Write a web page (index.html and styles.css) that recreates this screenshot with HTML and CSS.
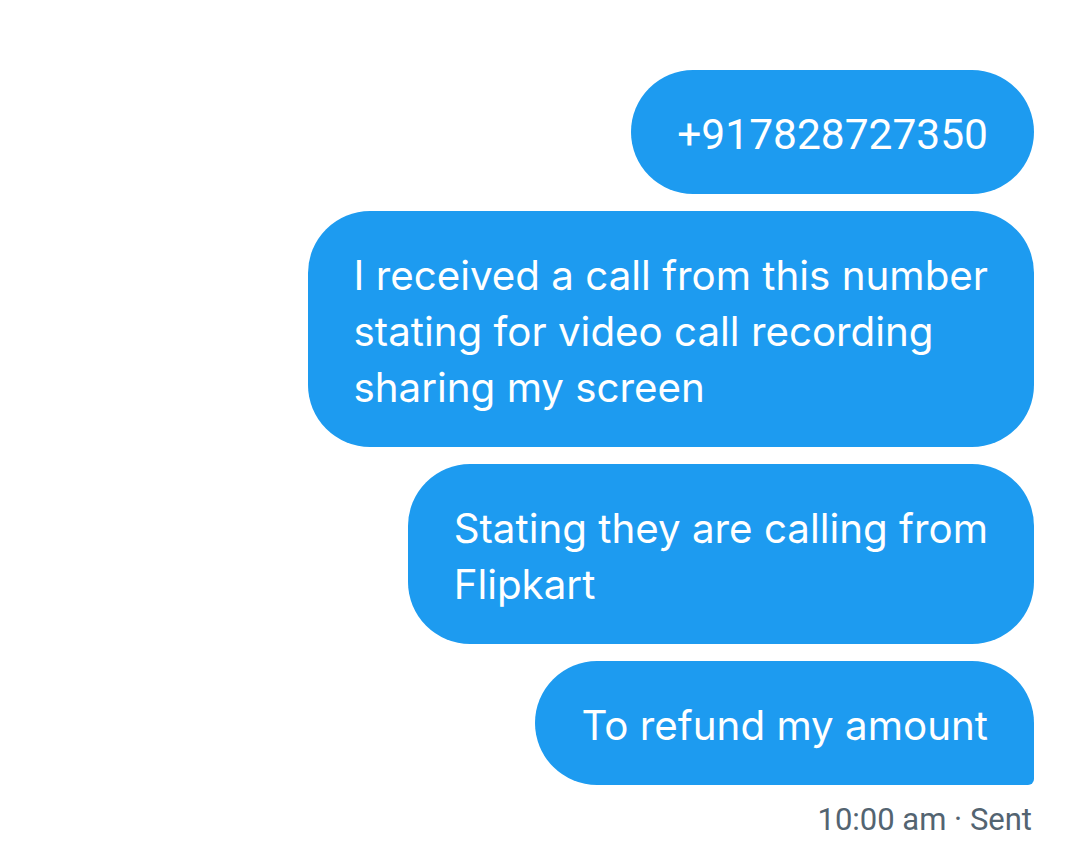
FILE: index.html
```html
<!DOCTYPE html>
<html lang="en">
<head>
<meta charset="utf-8">
<title>Messages</title>
<link rel="stylesheet" href="styles.css">
</head>
<body>
<main class="thread">
  <div class="bubble bubble-number">+917828727350</div>
  <div class="bubble">I received a call from this number<br>stating for video call recording<br>sharing my screen</div>
  <div class="bubble">Stating they are calling from<br>Flipkart</div>
  <div class="bubble bubble-last">To refund my amount</div>
  <div class="meta">10:00 am · Sent</div>
</main>
</body>
</html>
```

FILE: styles.css
```css
html, body {
  margin: 0;
  padding: 0;
  background: #ffffff;
}

.thread {
  display: flex;
  flex-direction: column;
  align-items: flex-end;
  gap: 17px;
  padding: 70px 46px 0 0;
}

.bubble {
  background: #1d9bf0;
  color: #ffffff;
  font-family: "Inter", "Liberation Sans", sans-serif;
  font-size: 40.3px;
  line-height: 56px;
  padding: 37px 46px 31px;
  border-radius: 62px;
  white-space: nowrap;
}

.bubble-number {
  font-family: "Roboto", "Liberation Sans", sans-serif;
  font-size: 42.5px;
}

.bubble-last {
  border-bottom-right-radius: 6px;
}

.meta {
  font-family: "Roboto", "Liberation Sans", sans-serif;
  font-size: 31px;
  line-height: 40px;
  color: #536471;
  margin-top: -2px;
  padding-right: 2px;
}
```
